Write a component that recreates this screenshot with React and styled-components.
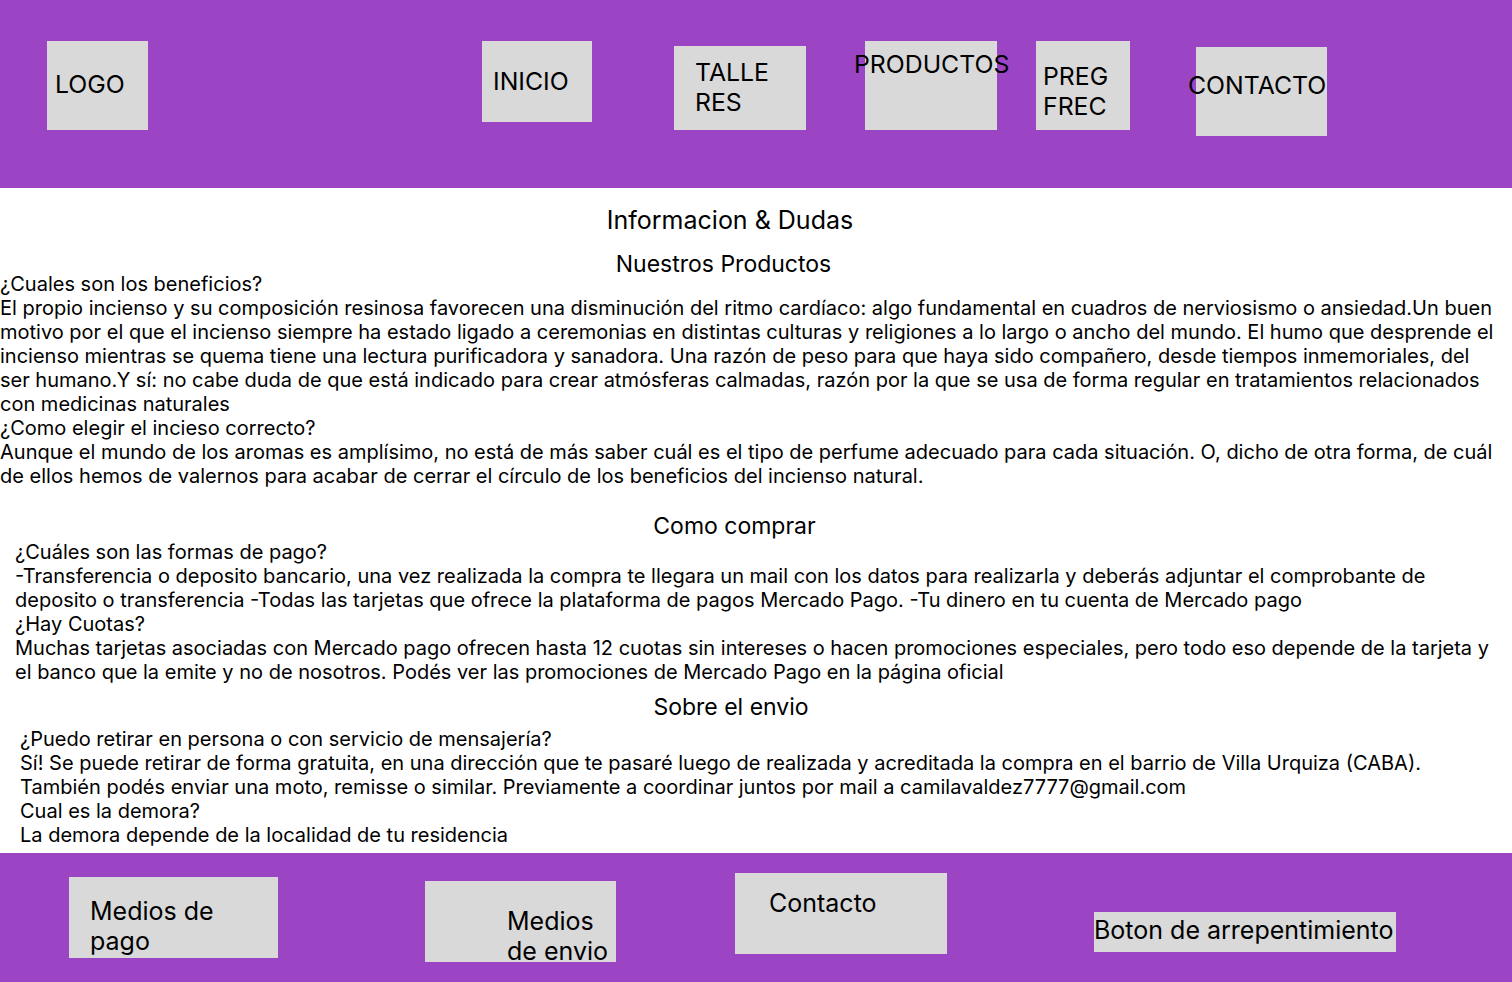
import React from 'react';
import styled, { createGlobalStyle } from 'styled-components';

const GlobalStyle = createGlobalStyle`
  * { box-sizing: border-box; }
  body {
    margin: 0;
    font-family: Inter, "Noto Sans", sans-serif;
    color: #000;
    background: #fff;
  }
`

const Page = styled.div`
  width: 1512px;
  min-height: 982px;
  display: flex;
  flex-direction: column;
`

const Bar = styled.header`
  height: ${(p) => p.$height}px;
  background: #9b44c4;
  display: flex;
  align-items: flex-start;
  flex-shrink: 0;
  font-size: ${(p) => p.$font}px;
`

const Box = styled.div`
  background: #d9d9d9;
  margin-left: ${(p) => p.$left}px;
  margin-top: ${(p) => p.$top}px;
  width: ${(p) => p.$w}px;
  height: ${(p) => p.$h}px;
  padding-left: ${(p) => p.$pl || 0}px;
  padding-top: ${(p) => p.$pt || 0}px;
  line-height: 30px;
  white-space: nowrap;
  flex-shrink: 0;
`

const Label = styled.span`
  display: block;
  margin-left: ${(p) => p.$shift || 0}px;
`

const Main = styled.main`
  padding: 0 16px 6px 0;
  display: flex;
  flex-direction: column;
`

const Title = styled.h1`
  margin: 18px 0 0;
  width: ${(p) => p.$w}px;
  text-align: center;
  font-size: 25px;
  line-height: 28px;
  font-weight: 400;
`

const SubTitle = styled.h2`
  margin: ${(p) => p.$mt}px 0 ${(p) => p.$mb}px;
  width: ${(p) => p.$w}px;
  text-align: center;
  font-size: 23px;
  line-height: 24px;
  font-weight: 400;
`

const Text = styled.div`
  padding-left: ${(p) => p.$indent || 0}px;
  font-size: 20px;
  line-height: 24px;

  p { margin: 0; }
`

function App() {
  return (
    <Page>
      <GlobalStyle />
      <Bar $height={188} $font={24.8}>
        <Box $left={47} $top={41} $w={101} $h={89} $pl={8} $pt={28}><Label>LOGO</Label></Box>
        <Box $left={334} $top={41} $w={110} $h={81} $pl={11} $pt={25}><Label>INICIO</Label></Box>
        <Box $left={82} $top={46} $w={132} $h={84} $pl={21} $pt={11}><Label>TALLE<br />RES</Label></Box>
        <Box $left={59} $top={41} $w={132} $h={89} $pt={8}><Label $shift={-11}>PRODUCTOS</Label></Box>
        <Box $left={39} $top={41} $w={94} $h={89} $pl={7} $pt={20}><Label>PREG<br />FREC</Label></Box>
        <Box $left={66} $top={47} $w={131} $h={89} $pt={23}><Label $shift={-8}>CONTACTO</Label></Box>
      </Bar>

      <Main>
        <Title $w={1460}>Informacion &amp; Dudas</Title>
        <SubTitle $w={1447} $mt={18} $mb={-4}>Nuestros Productos</SubTitle>
        <Text>
          <p>¿Cuales son los beneficios?</p>
          <p>El propio incienso y su composición resinosa favorecen una disminución del ritmo cardíaco: algo fundamental en cuadros de nerviosismo o ansiedad.Un buen motivo por el que el incienso siempre ha estado ligado a ceremonias en distintas culturas y religiones a lo largo o ancho del mundo. El humo que desprende el incienso mientras se quema tiene una lectura purificadora y sanadora. Una razón de peso para que haya sido compañero, desde tiempos inmemoriales, del ser humano.Y sí: no cabe duda de que está indicado para crear atmósferas calmadas, razón por la que se usa de forma regular en tratamientos relacionados con medicinas naturales</p>
          <p>¿Como elegir el incieso correcto?</p>
          <p>Aunque el mundo de los aromas es amplísimo, no está de más saber cuál es el tipo de perfume adecuado para cada situación. O, dicho de otra forma, de cuál de ellos hemos de valernos para acabar de cerrar el círculo de los beneficios del incienso natural.</p>
        </Text>

        <SubTitle $w={1469} $mt={26} $mb={2}>Como comprar</SubTitle>
        <Text $indent={15}>
          <p>¿Cuáles son las formas de pago?</p>
          <p>-Transferencia o deposito bancario, una vez realizada la compra te llegara un mail con los datos para realizarla y deberás adjuntar el comprobante de deposito o transferencia -Todas las tarjetas que ofrece la plataforma de pagos Mercado Pago. -Tu dinero en tu cuenta de Mercado pago</p>
          <p>¿Hay Cuotas?</p>
          <p>Muchas tarjetas asociadas con Mercado pago ofrecen hasta 12 cuotas sin intereses o hacen promociones especiales, pero todo eso depende de la tarjeta y el banco que la emite y no de nosotros. Podés ver las promociones de Mercado Pago en la página oficial</p>
        </Text>

        <SubTitle $w={1462} $mt={11} $mb={8}>Sobre el envio</SubTitle>
        <Text $indent={20}>
          <p>¿Puedo retirar en persona o con servicio de mensajería?</p>
          <p>Sí! Se puede retirar de forma gratuita, en una dirección que te pasaré luego de realizada y acreditada la compra en el barrio de Villa Urquiza (CABA). También podés enviar una moto, remisse o similar. Previamente a coordinar juntos por mail a camilavaldez7777@gmail.com</p>
          <p>Cual es la demora?</p>
          <p>La demora depende de la localidad de tu residencia</p>
        </Text>
      </Main>

      <Bar $height={129} $font={25}>
        <Box $left={69} $top={24} $w={209} $h={81} $pl={21} $pt={19}><Label>Medios de<br />pago</Label></Box>
        <Box $left={147} $top={28} $w={191} $h={81} $pl={82} $pt={25}><Label>Medios<br />de envio</Label></Box>
        <Box $left={119} $top={20} $w={212} $h={81} $pl={34} $pt={15}><Label>Contacto</Label></Box>
        <Box $left={147} $top={59} $w={302} $h={40} $pt={3}><Label>Boton de arrepentimiento</Label></Box>
      </Bar>
    </Page>
  );
}

export default App;
